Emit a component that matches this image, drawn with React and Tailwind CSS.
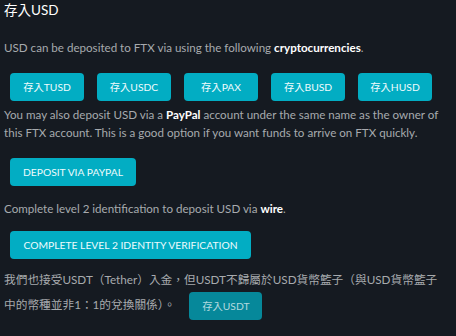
const coins = ["TUSD", "USDC", "PAX", "BUSD", "HUSD"];

const Btn = ({ children, className = "" }) => (
  <button
    className={`h-[28px] rounded-[4px] bg-[#02adc3] text-[10.3px] font-normal text-[#eefbfd] leading-none ${className}`}
  >
    {children}
  </button>
);

export default function App() {
  return (
    <div
      className="w-[456px] h-[336px] overflow-hidden bg-[#151a21] pl-1 pr-[6px] text-[11.6px] leading-[18px] text-[#a7aaae]"
      style={{ fontFamily: "Lato, 'Noto Sans CJK TC', sans-serif" }}
    >
      <h2 className="text-[13.5px] leading-[20px] text-white">存入USD</h2>

      <p className="mt-[19px]">
        USD can be deposited to FTX via using the following{" "}
        <b className="font-bold text-white">cryptocurrencies</b>.
      </p>

      <div className="mt-4 ml-[6px] flex gap-[13px]">
        {coins.map((c) => (
          <Btn key={c} className="w-[74px]">
            存入{c}
          </Btn>
        ))}
      </div>

      <p className="mt-[5px]">
        You may also deposit USD via a <b className="font-bold text-white">PayPal</b> account under the same name as the owner of this FTX account. This is a good option if you want funds to arrive on FTX quickly.
      </p>

      <Btn className="mt-4 ml-[6px] w-[126px]">DEPOSIT VIA PAYPAL</Btn>

      <p className="mt-[14px]">
        Complete level 2 identification to deposit USD via <b className="font-bold text-white">wire</b>.
      </p>

      <Btn className="mt-[13px] ml-[6px] w-[241px]">COMPLETE LEVEL 2 IDENTITY VERIFICATION</Btn>

      <p className="mt-[8px] w-[442px] text-[11.7px] leading-[25px]">
        我們也接受USDT（Tether）入金，但USDT不歸屬於USD貨幣籃子（與USD貨幣籃子中的幣種並非1：1的兌換關係）。
        <button className="ml-[14px] inline-block h-[28px] w-[73px] rounded-[4px] bg-[#02adc3]/75 align-middle text-[10.3px] leading-none text-white/70">
          存入USDT
        </button>
      </p>
    </div>
  );
}
